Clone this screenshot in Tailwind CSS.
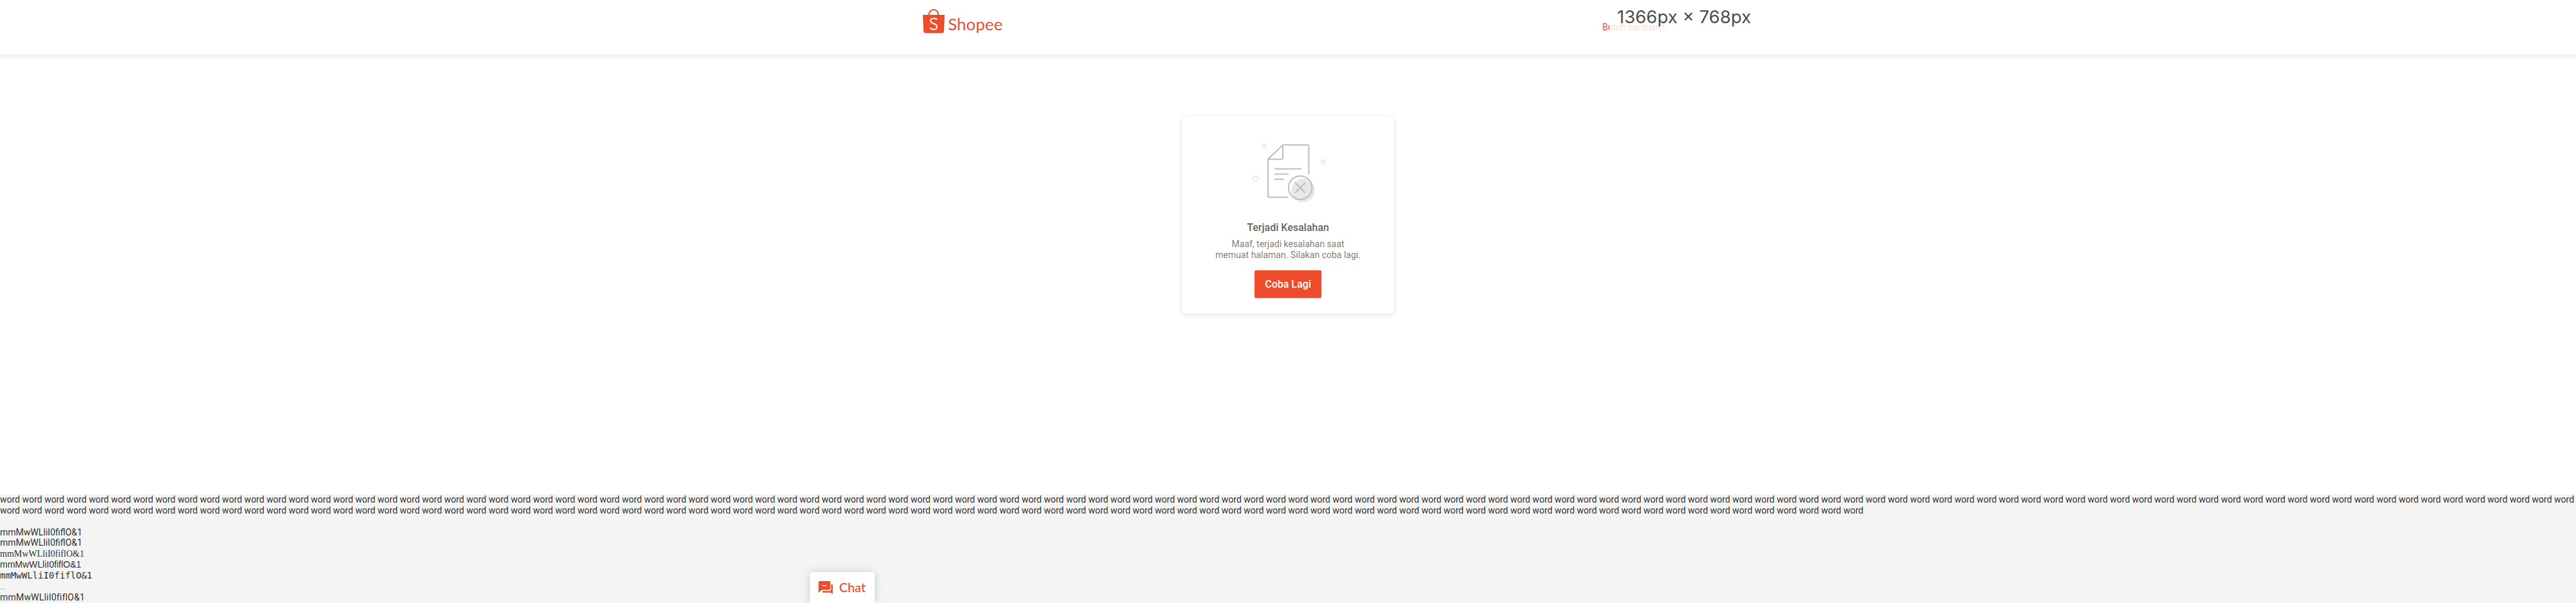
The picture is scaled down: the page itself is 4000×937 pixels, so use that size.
<!DOCTYPE html>
<html lang="id">
<head>
<meta charset="utf-8">
<title>Shopee</title>
<script src="https://cdn.jsdelivr.net/npm/@tailwindcss/browser@4"></script>
</head>
<body class="h-[937px] overflow-hidden bg-[#f4f4f4] font-['Roboto',sans-serif] text-sm leading-[17px] text-black/85">
<div class="flex h-[768px] flex-col bg-white">
  <header class="relative h-[84px] shrink-0 bg-white shadow-[0_6px_6px_rgba(0,0,0,0.06)]">
    <div class="mx-auto flex h-full w-[1200px] items-start justify-between pl-[32px]">
      <svg class="mt-[10px] h-[48px] w-[140px]" viewBox="0 0 140 48" fill="none">
        <path d="M10.3 14C10.8 1.9 24.8 1.9 25.3 14" stroke="#ee4d2d" stroke-width="2"/>
        <path d="M1 13H34.8L33.9 38Q33.7 41.4 30.4 41.4H5.5Q2.2 41.4 2 38Z" fill="#ee4d2d"/>
        <path d="M23 20.5C20.5 17.7 13.6 17.6 13 22C12.5 28 23.5 25.5 23 31.5C22.4 37 15 37 12 33" stroke="#fff" stroke-width="2"/>
        <text x="40" y="36.8" font-family="Lato, sans-serif" font-size="25.5" textLength="85" lengthAdjust="spacingAndGlyphs" fill="#ee4d2d">Shopee</text>
      </svg>
      <span class="mr-[16px] mt-[34px] w-[96px] whitespace-nowrap text-[#ee4d2d]">Butuh bantuan?</span>
    </div>
    <div class="absolute left-[2499px] top-0 h-[52px] w-[234px] bg-white/80">
      <svg class="h-full w-full" viewBox="0 0 234 52"><text x="12" y="36" font-family="Inter, sans-serif" font-size="27.500" textLength="208" lengthAdjust="spacingAndGlyphs" fill="#4d4d4d">1366px × 768px</text></svg>
    </div>
  </header>
  <main class="flex justify-center pt-[97px]">
    <section class="flex h-[306px] w-[328px] flex-col items-center rounded bg-white shadow-[0_2px_10px_rgba(0,0,0,0.12)]">
      <svg class="mt-[19px] h-[130px] w-[160px]" viewBox="0 0 160 130" fill="none" stroke="#bdbdbd" stroke-width="2">
        <path d="M112.3 71V27Q112.3 25.3 110.6 25.3H72L49 47.5V104.5Q49 106.5 51 106.5H80.5"/>
        <path d="M72 25.3V44Q72 47.5 68.5 47.5H49"/>
        <path d="M59 62.5H101M59 70.5H81M59 78.5H74"/>
        <circle cx="103.4" cy="96" r="18.4" fill="#e8e8e8" stroke="none"/>
        <circle cx="99" cy="91.7" r="18.2"/>
        <path d="M91 83.7L107 99.7M107 83.7L91 99.7"/>
        <path d="M39.5 23L46.5 30M46.5 23L39.5 30M131.500 48L138.500 55M138.500 48L131.500 55" stroke="#e8e8e8"/>
        <circle cx="30" cy="77.500" r="4" stroke="#e8e8e8"/>
      </svg>
      <h1 class="mt-[14px] text-base font-medium leading-[19px] text-black/65">Terjadi Kesalahan</h1>
      <p class="mt-[8px] text-center text-black/54">Maaf, terjadi kesalahan saat<br>memuat halaman. Silakan coba lagi.</p>
      <button class="mt-[15px] h-[43px] w-[104px] rounded-[2px] bg-[#ee4d2d] text-base font-medium text-white">Coba Lagi</button>
    </section>
  </main>
</div>
<div class="flex flex-col whitespace-nowrap">
  <p id="words" class="whitespace-normal"></p>
  <p class="mt-[17px] h-4">mmMwWLliI0fiflO&amp;1</p>
  <p class="h-[17px]">mmMwWLliI0fiflO&amp;1</p>
  <p class="h-[17px] font-['Liberation_Serif',serif]">mmMwWLliI0fiflO&amp;1</p>
  <p class="h-[17px] font-['Liberation_Sans',sans-serif]">mmMwWLliI0fiflO&amp;1</p>
  <p class="h-[17px] font-['DejaVu_Sans_Mono',monospace]">mmMwWLliI0fiflO&amp;1</p>
  <p class="h-[17px]"><span class="mt-[12px] block h-px w-[9px] bg-[#c4c4c4]"></span></p>
  <p class="h-[17px] tracking-[0.2px]">mmMwWLliI0fiflO&amp;1</p>
</div>
<aside class="fixed bottom-0 left-[1258px] flex h-[48px] w-[100px] items-center rounded-t bg-white pl-[12px] shadow-[0_0_14px_rgba(0,0,0,0.16)]">
  <svg class="h-[22px] w-[80px] overflow-visible" viewBox="0 0 80 22" fill="#ee4d2d">
    <path d="M2 1H18Q19.500 1 19.500 2.500L19 13Q19 14.500 17.500 14.500H6L1 19V2Q1 1 2 1Z"/>
    <path d="M20.500 6H22Q23 6 23 7V21L19.500 18.800H8Q6.800 18.800 6.800 17.600V16.200H18.500Q20.500 16.200 20.500 14Z"/>
    <path d="M6.500 7.300Q10 9.500 13.500 7.300" fill="none" stroke="#fff" stroke-width="1.300"/>
    <text x="33" y="18" font-family="Lato, sans-serif" font-size="19" textLength="41" lengthAdjust="spacingAndGlyphs" stroke="#ee4d2d" stroke-width=".3">Chat</text>
  </svg>
</aside>
<script>document.getElementById('words').textContent = 'word '.repeat(200);</script>
</body>
</html>
